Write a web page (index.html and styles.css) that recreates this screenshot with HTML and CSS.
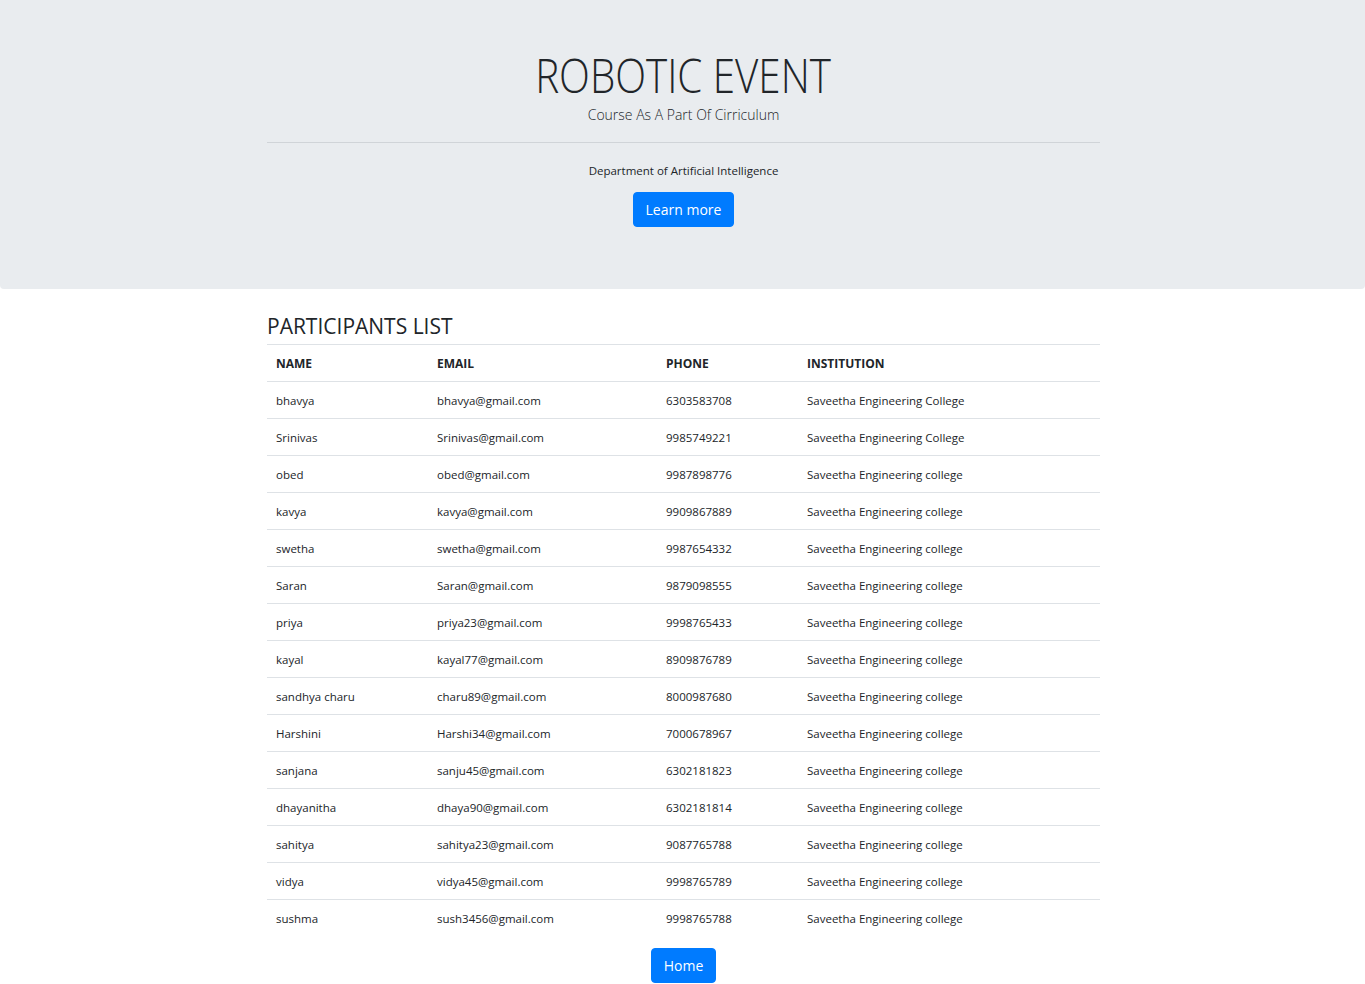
FILE: index.html
```html
<!DOCTYPE html>
<html lang="en">
<head>
<meta charset="utf-8">
<title>Robotic Event</title>
<link rel="stylesheet" href="styles.css">
</head>
<body>
<header class="jumbotron">
  <div class="container center">
    <h1 class="title"><span class="title-text">ROBOTIC EVENT</span></h1>
    <p class="lead">Course As A Part Of Cirriculum</p>
    <hr class="divider">
    <p class="dept">Department of Artificial Intelligence</p>
    <a class="btn" href="#">Learn more</a>
  </div>
</header>
<main class="container">
  <h2 class="section-title">PARTICIPANTS LIST</h2>
  <table class="table">
    <colgroup>
      <col class="c-name"><col class="c-email"><col class="c-phone"><col class="c-inst">
    </colgroup>
    <thead>
      <tr><th>NAME</th><th>EMAIL</th><th>PHONE</th><th>INSTITUTION</th></tr>
    </thead>
    <tbody>
      <tr><td>bhavya</td><td>bhavya@gmail.com</td><td>6303583708</td><td>Saveetha Engineering College</td></tr>
      <tr><td>Srinivas</td><td>Srinivas@gmail.com</td><td>9985749221</td><td>Saveetha Engineering College</td></tr>
      <tr><td>obed</td><td>obed@gmail.com</td><td>9987898776</td><td>Saveetha Engineering college</td></tr>
      <tr><td>kavya</td><td>kavya@gmail.com</td><td>9909867889</td><td>Saveetha Engineering college</td></tr>
      <tr><td>swetha</td><td>swetha@gmail.com</td><td>9987654332</td><td>Saveetha Engineering college</td></tr>
      <tr><td>Saran</td><td>Saran@gmail.com</td><td>9879098555</td><td>Saveetha Engineering college</td></tr>
      <tr><td>priya</td><td>priya23@gmail.com</td><td>9998765433</td><td>Saveetha Engineering college</td></tr>
      <tr><td>kayal</td><td>kayal77@gmail.com</td><td>8909876789</td><td>Saveetha Engineering college</td></tr>
      <tr><td>sandhya charu</td><td>charu89@gmail.com</td><td>8000987680</td><td>Saveetha Engineering college</td></tr>
      <tr><td>Harshini</td><td>Harshi34@gmail.com</td><td>7000678967</td><td>Saveetha Engineering college</td></tr>
      <tr><td>sanjana</td><td>sanju45@gmail.com</td><td>6302181823</td><td>Saveetha Engineering college</td></tr>
      <tr><td>dhayanitha</td><td>dhaya90@gmail.com</td><td>6302181814</td><td>Saveetha Engineering college</td></tr>
      <tr><td>sahitya</td><td>sahitya23@gmail.com</td><td>9087765788</td><td>Saveetha Engineering college</td></tr>
      <tr><td>vidya</td><td>vidya45@gmail.com</td><td>9998765789</td><td>Saveetha Engineering college</td></tr>
      <tr><td>sushma</td><td>sush3456@gmail.com</td><td>9998765788</td><td>Saveetha Engineering college</td></tr>
    </tbody>
  </table>
  <div class="center">
    <a class="btn" href="#">Home</a>
  </div>
</main>
</body>
</html>
```
FILE: styles.css
```css
* { box-sizing: border-box; }
html, body { margin: 0; padding: 0; }
body {
  font-family: "Open Sans", "Noto Sans", sans-serif;
  color: #212529;
  background: #fff;
  font-size: 12px;
}
.container {
  width: 835px;
  padding-left: 2px;
  margin: 0 auto;
}
.center { text-align: center; }

.jumbotron {
  background: #e9ecef;
  height: 289px;
  padding-top: 46px;
  border-radius: 0 0 4px 4px;
}
.title {
  margin: 0;
  font-family: "Open Sans", sans-serif;
  font-size: 48px;
  font-weight: 300;
  line-height: 58px;
  color: #212529;
}
.title-text {
  display: inline-block;
  transform: scaleX(0.84);
}
.lead {
  margin: 0;
  font-size: 14px;
  font-weight: 300;
  line-height: 22px;
}
.divider {
  margin: 16px 0 16px;
  border: 0;
  border-top: 1px solid #d0d4d8;
}
.dept {
  margin: 0 0 9px;
  font-size: 11.5px;
  line-height: 24px;
}
.btn {
  display: inline-block;
  background: #007bff;
  color: #fff;
  text-decoration: none;
  font-size: 14px;
  line-height: 21px;
  padding: 6px 12px;
  border-radius: 4px;
  border: 1px solid #007bff;
}

.section-title {
  margin: 22px 0 3px;
  font-size: 21px;
  font-weight: 400;
  line-height: 30px;
}
.table {
  width: 100%;
  border-collapse: collapse;
  margin-bottom: 11px;
  table-layout: fixed;
}
.c-name { width: 161px; }
.c-email { width: 229px; }
.c-phone { width: 141px; }
.c-inst { width: auto; }
.table th, .table td {
  text-align: left;
  padding: 0 9px;
  height: 37px;
  border-top: 1px solid #dee2e6;
  vertical-align: middle;
}
.table th {
  font-size: 12px;
  font-weight: 700;
}
.table td {
  font-size: 11.5px;
}
```
